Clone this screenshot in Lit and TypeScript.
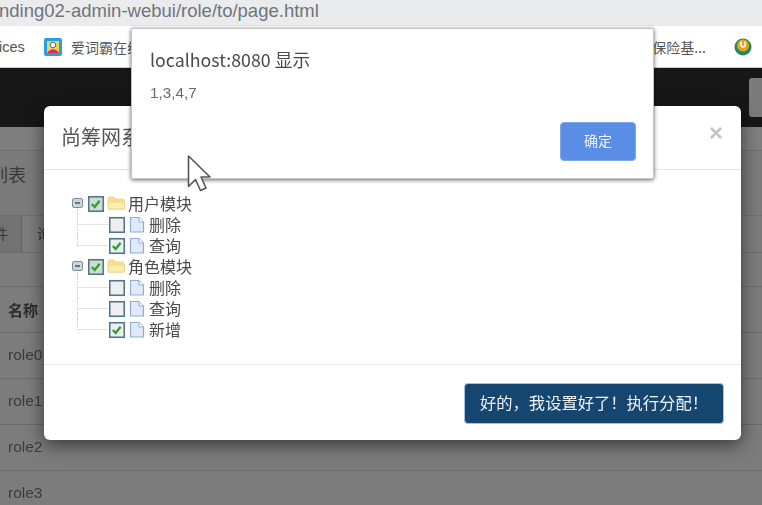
import { LitElement, html, css, svg, unsafeCSS } from "lit";
import { customElement } from "lit/decorators.js";

const CJK = unsafeCSS(`"Noto Sans CJK SC", "Liberation Sans", sans-serif`);

type Leaf = { label: string; checked: boolean };
type Node = Leaf & { children: Leaf[] };
const TREE: Node[] = [
  { label: "用户模块", checked: true, children: [{ label: "删除", checked: false }, { label: "查询", checked: true }] },
  { label: "角色模块", checked: true, children: [{ label: "删除", checked: false }, { label: "查询", checked: false }, { label: "新增", checked: true }] },
];

@customElement("app-root")
export class AppRoot extends LitElement {
  static styles = css`
    :host { display: block; width: 762px; height: 505px; overflow: hidden; position: relative; background: #7c7c7c; font-family: ${CJK}; }
    .scene { width: 762px; height: 505px; position: relative; overflow: hidden; filter: blur(0.35px); }
    .addr { height: 26px; background: #e9ebed; color: #70757a; font: 18.5px/21px "Liberation Sans", sans-serif; overflow: hidden; white-space: nowrap; }
    .addr span { display: block; margin-left: -1px; }
    .marks { height: 42px; background: #fff; display: flex; align-items: center; font-size: 14px; color: #444; white-space: nowrap; border-bottom: 1px solid #cfcfcf; box-sizing: border-box; }
    .marks .ices { width: 45px; margin-left: -1px; font: 14.5px "Liberation Sans", sans-serif; color: #555; }
    .marks .word { margin-left: 9px; color: #555; }
    .marks .sp { flex: 1; }
    .marks .ins { margin-right: 28px; color: #555; font-size: 14px; }
    .marks svg { display: block; }
    .marks .u { margin-right: 10px; }
    .nav { height: 59px; background: #171717; display: flex; justify-content: flex-end; align-items: center; }
    .nav i { display: block; width: 13px; height: 39px; margin-top: -1px; background: #7b7b7b; border-radius: 3px 0 0 3px; }
    .page { color: #383838; font-size: 14px; }
    .crumb { height: 24px; box-sizing: border-box; border-bottom: 1px solid #6e6e6e; background: #7f7f7f; }
    .head { height: 64px; box-sizing: border-box; background: #7b7b7b; font-size: 18px; line-height: 47px; color: #3a3a3a; overflow: hidden; }
    .head span { display: block; margin-left: -10px; }
    .tools { height: 38px; box-sizing: border-box; display: flex; border-top: 1px solid #6e6e6e; border-bottom: 1px solid #6e6e6e; }
    .tools b { font-weight: 400; width: 22px; box-sizing: border-box; background: #727272; border-right: 1px solid #666; line-height: 35px; text-indent: -6px; overflow: hidden; white-space: nowrap; }
    .tools b + b { width: 30px; background: #7c7c7c; text-indent: 15px; }
    .gap { height: 34px; border-bottom: 1px solid #6c6c6c; box-sizing: border-box; }
    .row { height: 46px; box-sizing: border-box; border-bottom: 1px solid #6a6a6a; padding-left: 8px; font: 15.5px/44px "Liberation Sans", sans-serif; color: #3b3b3b; }
    .row.h { font: 700 15px/45px ${CJK}; color: #2c2c2c; }
    .modal { position: absolute; left: 44px; top: 106px; width: 697px; height: 334px; background: #fff; border-radius: 6px; box-shadow: 0 5px 18px rgba(0,0,0,.55); display: flex; flex-direction: column; }
    .m-head { height: 64px; box-sizing: border-box; border-bottom: 1px solid #e5e5e5; display: flex; justify-content: space-between; align-items: center; padding: 0 18px; color: #555; font-size: 20px; white-space: nowrap; }
    .m-head .t { position: relative; top: -1px; left: -1px; }
    .m-head .x { font: 700 24px "Liberation Sans", sans-serif; color: #c4c4c4; position: relative; top: -5px; }
    .m-body { flex: 1; padding-top: 23px; box-sizing: border-box; }
    .m-foot { height: 76px; box-sizing: border-box; border-top: 1px solid #e9e9e9; display: flex; justify-content: flex-end; padding: 18px 17px 0 0; }
    .go { width: 260px; height: 41px; box-sizing: border-box; border: 1px solid #a5c0e4; border-radius: 4px; background: #154670; color: #eef2f6; font-size: 16.3px; line-height: 36px; text-align: center; white-space: nowrap; }
    .n { display: flex; align-items: center; height: 21px; padding-left: 28px; color: #4a4a4a; font-size: 16px; line-height: 21px; }
    .n svg { display: block; flex: none; }
    .alert { position: absolute; left: 131px; top: 28px; width: 523px; height: 151px; box-sizing: border-box; background: #fff; border: 1px solid #c4c4c4; border-radius: 2px; box-shadow: 0 1px 4px rgba(0,0,0,.6); padding: 18px 17px 0 18px; display: flex; flex-direction: column; }
    .alert .ti { font-size: 17.8px; line-height: 24px; color: #4a4a4a; }
    .alert .msg { font: 15.3px/20px "Liberation Sans", sans-serif; color: #6a6a6a; margin-top: 12px; }
    .alert .ok { align-self: flex-end; margin-top: 19px; width: 76px; height: 39px; box-sizing: border-box; border: 1px solid #7ea6ea; background: #5a8de6; border-radius: 4px; color: #eef4fd; font-size: 14px; line-height: 35px; text-align: center; }
    .cursor { position: absolute; left: 180px; top: 150px; }
  `;

  private check(x: boolean, root: boolean) {
    return svg`
      <rect x="0.75" y="0.75" width="14.5" height="14.5" fill="${root ? "#cfdccf" : "#efefef"}" stroke="#55758f" stroke-width="1.6"/>
      ${x ? svg`<path d="M3.8 8 L6.7 11 L11.6 4.8" fill="none" stroke="#2ea03a" stroke-width="2.4"/>` : ""}`;
  }

  private rootRow(n: Node) {
    return html`<div class="n">
      <svg width="16" height="21" viewBox="0 0 16 21">
        <path d="M5.5 14 V21" stroke="#c4c4c4" stroke-dasharray="1 1"/>
        <rect x="0.5" y="5.5" width="10" height="9" rx="1.5" fill="#ccd5da" stroke="#7f8f98"/>
        <path d="M3 10 H8" stroke="#334" stroke-width="1.2"/>
      </svg>
      <svg width="19" height="21" viewBox="0 0 19 21"><g transform="translate(0 3)">${this.check(n.checked, true)}</g></svg>
      <svg width="21" height="21" viewBox="0 0 21 21">
        <path d="M1 9 V5.5 Q1 4 2.5 4 H7 L9 6 H16 Q17 6 17 7.5 V16 H1.5 Z" fill="#f8de8c" stroke="#f0d68a"/>
        <path d="M1 16 L1.5 9 H17.5 V16 Z" fill="#fdeeae" stroke="#f0d68a"/>
      </svg>
      <span>${n.label}</span>
    </div>`;
  }

  private childRow(c: Leaf, last: boolean) {
    return html`<div class="n">
      <svg width="37" height="21" viewBox="0 0 37 21">
        <path d="M5.5 0 V${last ? 11 : 21} M5.5 10.5 H37" stroke="#c8c8c8" stroke-dasharray="1 1" fill="none"/>
      </svg>
      <svg width="20" height="21" viewBox="0 0 20 21"><g transform="translate(0 3)">${this.check(c.checked, false)}</g></svg>
      <svg width="20" height="21" viewBox="0 0 20 21">
        <path d="M1.5 3.5 H10 L14.5 8 V18 H1.5 Z" fill="#dfeafa" stroke="#8fadd6" stroke-width="1.2"/>
        <path d="M10 3.5 V8 H14.5" fill="#fff" stroke="#8fadd6"/>
      </svg>
      <span>${c.label}</span>
    </div>`;
  }

  render() {
    return html`<div class="scene">
      <div class="addr"><span>nding02-admin-webui/role/to/page.html</span></div>
      <div class="marks">
        <span class="ices">ices</span>
        <svg width="18" height="18" viewBox="0 0 18 18">
          <rect width="18" height="18" rx="2" fill="#2a9fe0"/>
          <rect x="3" y="3" width="12" height="12" fill="#f4d34c"/>
          <circle cx="9" cy="7" r="2.8" fill="#fff" stroke="#2a6fd0"/>
          <path d="M3 15 Q9 7.5 15 15 Z" fill="#e0245e"/>
        </svg>
        <span class="word">爱词霸在线</span>
        <span class="sp"></span>
        <span class="ins">保险基...</span>
        <svg class="u" width="18" height="18" viewBox="0 0 18 18">
          <circle cx="9" cy="9" r="8.5" fill="#1f8a5a"/>
          <circle cx="9" cy="7.5" r="6" fill="#f0a020"/>
          <path d="M7 3.5 V8 Q9 10 11 8 V3.5" fill="none" stroke="#fff" stroke-width="1.5"/>
        </svg>
      </div>
      <div class="nav"><i></i></div>
      <div class="page">
        <div class="crumb"></div>
        <div class="head"><span>列表</span></div>
        <div class="tools"><b>件</b><b>询</b></div>
        <div class="gap"></div>
        <div class="row h">名称</div>
        <div class="row">role0</div>
        <div class="row">role1</div>
        <div class="row">role2</div>
        <div class="row">role3</div>
      </div>

      <div class="modal">
        <div class="m-head"><span class="t">尚筹网系统弹窗</span><span class="x">×</span></div>
        <div class="m-body">
          ${TREE.map((n) => html`${this.rootRow(n)}${n.children.map((c, i) => this.childRow(c, i === n.children.length - 1))}`)}
        </div>
        <div class="m-foot"><div class="go">好的，我设置好了！执行分配！</div></div>
      </div>

      <div class="alert">
        <div class="ti">localhost:8080 显示</div>
        <div class="msg">1,3,4,7</div>
        <div class="ok">确定</div>
      </div>

      <svg class="cursor" width="36" height="44" viewBox="0 0 36 44">
        <path d="M8.5 6 V36.5 L15.5 29.5 L20.5 40.5 L26 38 L21 27 H30 Z" fill="#fff" stroke="#555" stroke-width="1.6" stroke-linejoin="round"/>
      </svg>
    </div>`;
  }
}
